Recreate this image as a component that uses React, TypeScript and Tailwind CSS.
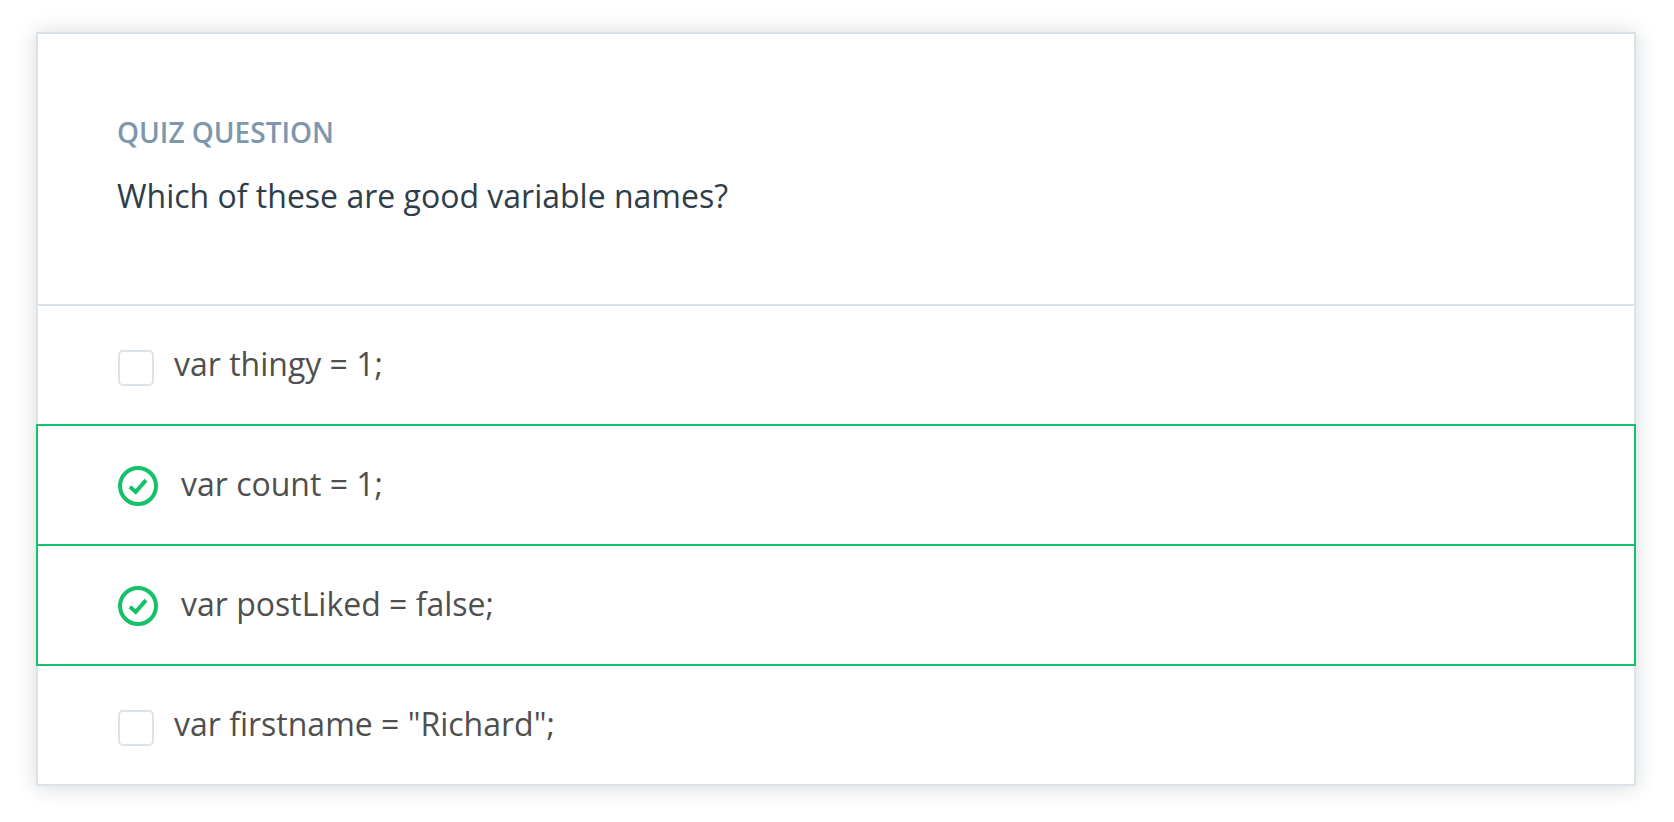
import { useState } from "react";

type Option = { id: string; label: string; correct: boolean };

const options: Option[] = [
  { id: "thingy", label: "var thingy = 1;", correct: false },
  { id: "count", label: "var count = 1;", correct: true },
  { id: "post-liked", label: "var postLiked = false;", correct: true },
  { id: "firstname", label: 'var firstname = "Richard";', correct: false },
];

function CheckCircle() {
  return (
    <svg
      viewBox="0 0 40 40"
      fill="none"
      stroke="currentColor"
      aria-hidden="true"
      className="pointer-events-none col-start-1 row-start-1 size-10 text-[#15c26b]"
    >
      <circle cx="20" cy="20" r="18" strokeWidth="4" />
      <path d="M11.9 20.8L17.7 25.9L28 14.1" strokeWidth="4" />
    </svg>
  );
}

function OptionRow({
  option,
  checked,
  onToggle,
}: {
  option: Option;
  checked: boolean;
  onToggle: () => void;
}) {
  return (
    <li
      className={
        checked
          ? "relative z-10 -mt-0.5 border-2 border-[#15c26b]"
          : "-mt-0.5 border-2 border-[#dbe2e8]"
      }
    >
      <label
        htmlFor={option.id}
        className="flex cursor-pointer items-start px-20 py-[38px] text-[32px] leading-10 text-[#4f4f4f]"
      >
        <span className={checked ? "mt-0.5 mr-[23px] grid shrink-0" : "mt-1.5 mr-5 grid shrink-0"}>
          <input
            id={option.id}
            type="checkbox"
            checked={checked}
            onChange={onToggle}
            className={
              checked
                ? "col-start-1 row-start-1 size-10 appearance-none rounded-full"
                : "col-start-1 row-start-1 size-9 appearance-none rounded-[5px] border-2 border-[#dbe2e8] bg-white"
            }
          />
          {checked && <CheckCircle />}
        </span>
        <span>{option.label}</span>
      </label>
    </li>
  );
}

export default function App() {
  const [selected, setSelected] = useState<string[]>(
    options.filter((o) => o.correct).map((o) => o.id),
  );
  const toggle = (id: string) =>
    setSelected((prev) => (prev.includes(id) ? prev.filter((s) => s !== id) : [...prev, id]));

  return (
    <main className="bg-white pt-8 pr-[38px] pb-9 pl-9 font-['Open_Sans',sans-serif]">
      <section className="bg-white shadow-[0_1px_20px_rgba(46,61,73,0.2)]">
        <header className="border-2 border-[#dbe2e8] px-[79px] pt-[78px] pb-[88px]">
          <h1 className="text-[28px] leading-10 font-semibold text-[#7d97ad]">QUIZ QUESTION</h1>
          <p className="mt-6 text-[32px] leading-10 text-[#2e3d49]">
            Which of these are good variable names?
          </p>
        </header>
        <ul>
          {options.map((option) => (
            <OptionRow
              key={option.id}
              option={option}
              checked={selected.includes(option.id)}
              onToggle={() => toggle(option.id)}
            />
          ))}
        </ul>
      </section>
    </main>
  );
}
